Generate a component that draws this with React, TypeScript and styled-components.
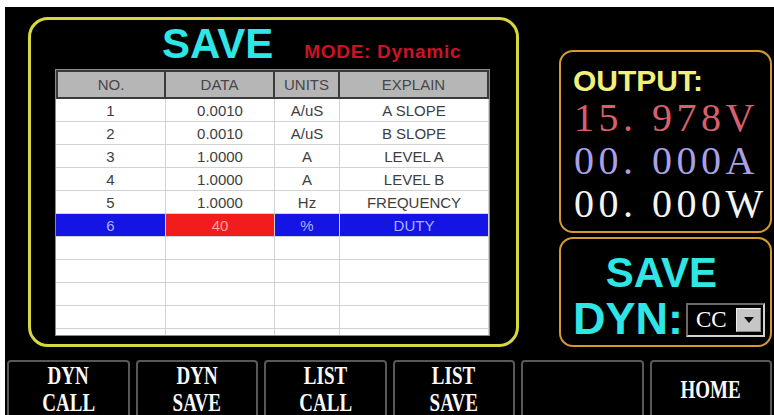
import React from 'react';
import styled, { createGlobalStyle } from 'styled-components';

const GlobalStyle = createGlobalStyle`
  html, body {
    margin: 0;
    padding: 0;
    background: #ffffff;
    overflow: hidden;
  }
  * {
    box-sizing: border-box;
  }
`;

const Screen = styled.div`
  margin: 7px 0 0 5px;
  width: 769px;
  height: 408px;
  background: #000;
  overflow: hidden;
  display: flex;
  flex-direction: column;
  font-family: 'Liberation Sans', Arial, sans-serif;
`;

const TopArea = styled.div`
  display: flex;
  height: 353px;
  padding-left: 23px;
  flex-shrink: 0;
`;

const SavePanel = styled.div`
  margin-top: 10px;
  width: 491px;
  height: 330px;
  border: 3px solid #d8d83c;
  border-radius: 20px;
  display: flex;
  flex-direction: column;
`;

const TitleRow = styled.div`
  display: flex;
  align-items: baseline;
  padding: 3px 0 0 131px;
`;

const Title = styled.span`
  color: #2ee6e6;
  font-weight: 700;
  font-size: 42px;
  line-height: 42px;
`;

const Mode = styled.span`
  margin-left: 31px;
  color: #cc1228;
  font-weight: 700;
  font-size: 19px;
  letter-spacing: 0.7px;
`;

const TableFrame = styled.div`
  margin: 4px 0 0 24px;
  width: 435px;
  height: 267px;
  overflow: hidden;
  background: #fff;
  border: 1px solid #8a8a8a;
  font-size: 15px;
`;

const Row = styled.div<{ $header?: boolean }>`
  display: grid;
  grid-template-columns: 110px 109px 65px 149px;
  height: ${(p) => (p.$header ? 29 : 23)}px;
  ${(p) =>
    p.$header
      ? `border-top: 2px solid #3a3a3a; border-bottom: 2px solid #3a3a3a; background: #b6b6b6;`
      : `border-bottom: 1px solid #d2d2d2;`}
`;

const Cell = styled.div<{ $header?: boolean; $tone?: 'blue' | 'red' }>`
  display: flex;
  align-items: center;
  justify-content: center;
  color: ${(p) =>
    p.$tone === 'blue' ? '#a9b4ff' : p.$tone === 'red' ? '#ffa6a6' : p.$header ? '#474747' : '#3e3e3e'};
  background: ${(p) =>
    p.$tone === 'blue' ? '#1414e4' : p.$tone === 'red' ? '#f21c1c' : 'transparent'};
  border-right: ${(p) => (p.$header ? '2px solid #3a3a3a' : '1px solid #d2d2d2')};
  &:first-child {
    border-left: ${(p) => (p.$header ? '2px solid #3a3a3a' : '0')};
  }
`;

const RightColumn = styled.div`
  margin-left: 40px;
  width: 213px;
  display: flex;
  flex-direction: column;
`;

const OrangePanel = styled.div<{ $height: number; $top: number }>`
  margin-top: ${(p) => p.$top}px;
  height: ${(p) => p.$height}px;
  border: 2px solid #d49a2f;
  border-radius: 14px;
  display: flex;
  flex-direction: column;
`;

const OutputBody = styled.div`
  padding: 14px 0 0 12px;
`;

const OutputTitle = styled.div`
  color: #f0f07a;
  font-weight: 700;
  font-size: 30px;
  line-height: 30px;
`;

const Readout = styled.div<{ $color: string }>`
  color: ${(p) => p.$color};
  font-family: 'Liberation Serif', 'Times New Roman', serif;
  font-size: 40px;
  line-height: 43px;
  letter-spacing: 4.5px;
  margin-left: 1px;
  white-space: pre;
  &:first-of-type {
    margin-top: 2px;
  }
`;

const SaveBody = styled.div`
  padding-top: 12px;
  display: flex;
  flex-direction: column;
`;

const SaveTitle = styled.div`
  color: #2ee6e6;
  font-weight: 700;
  font-size: 42px;
  line-height: 43px;
  text-align: center;
  padding-right: 8px;
`;

const DynRow = styled.div`
  display: flex;
  align-items: center;
  margin-top: 2px;
  padding-left: 12px;
`;

const DynLabel = styled.span`
  color: #2ee6e6;
  font-weight: 700;
  font-size: 45px;
  line-height: 45px;
`;

const Dropdown = styled.div`
  margin: 3px 0 0 3px;
  width: 79px;
  height: 34px;
  background: #000;
  border: 2px solid;
  border-color: #6a6a6a #d2d2d2 #d2d2d2 #6a6a6a;
  display: flex;
  align-items: center;
  justify-content: space-between;
  padding: 0 2px 0 8px;
`;

const DropValue = styled.span`
  color: #fff;
  font-family: 'Liberation Serif', 'Times New Roman', serif;
  font-size: 23px;
`;

const DropArrow = styled.div`
  width: 25px;
  height: 24px;
  background: #c6c6c6;
  border: 1px solid;
  border-color: #efefef #8a8a8a #8a8a8a #efefef;
  display: flex;
  align-items: center;
  justify-content: center;
`;

const ButtonBar = styled.div`
  display: grid;
  grid-template-columns: repeat(6, 1fr);
  gap: 6px;
  padding: 0 2px;
`;

const SoftKey = styled.div`
  height: 58px;
  border: 2px solid #585858;
  border-radius: 4px;
  background: #000;
  display: flex;
  flex-direction: column;
  align-items: center;
  justify-content: center;
`;

const KeyLine = styled.span`
  display: block;
  color: #fafafa;
  font-family: 'Liberation Serif', 'Times New Roman', serif;
  font-weight: 700;
  font-size: 25px;
  line-height: 27px;
  transform: scaleX(0.76);
  white-space: nowrap;
`;

const rows = [
  ['1', '0.0010', 'A/uS', 'A SLOPE'],
  ['2', '0.0010', 'A/uS', 'B SLOPE'],
  ['3', '1.0000', 'A', 'LEVEL A'],
  ['4', '1.0000', 'A', 'LEVEL B'],
  ['5', '1.0000', 'Hz', 'FREQUENCY'],
];

const keys = [['DYN', 'CALL'], ['DYN', 'SAVE'], ['LIST', 'CALL'], ['LIST', 'SAVE'], [], ['HOME']];

const App: React.FC = () => {
  return (
    <>
      <GlobalStyle />
      <Screen>
        <TopArea>
          <SavePanel>
            <TitleRow>
              <Title>SAVE</Title>
              <Mode>MODE: Dynamic</Mode>
            </TitleRow>
            <TableFrame>
              <Row $header>
                {['NO.', 'DATA', 'UNITS', 'EXPLAIN'].map((h) => (
                  <Cell key={h} $header>
                    {h}
                  </Cell>
                ))}
              </Row>
              {rows.map((r) => (
                <Row key={r[0]}>
                  {r.map((c, i) => (
                    <Cell key={i}>{c}</Cell>
                  ))}
                </Row>
              ))}
              <Row>
                <Cell $tone="blue">6</Cell>
                <Cell $tone="red">40</Cell>
                <Cell $tone="blue">%</Cell>
                <Cell $tone="blue">DUTY</Cell>
              </Row>
              {[0, 1, 2, 3, 4].map((n) => (
                <Row key={`e${n}`}>
                  <Cell />
                  <Cell />
                  <Cell />
                  <Cell />
                </Row>
              ))}
            </TableFrame>
          </SavePanel>

          <RightColumn>
            <OrangePanel $top={43} $height={183}>
              <OutputBody>
                <OutputTitle>OUTPUT:</OutputTitle>
                <Readout $color="#d8606c">15. 978V</Readout>
                <Readout $color="#a9a0e6">00. 000A</Readout>
                <Readout $color="#f4f4f4">00. 000W</Readout>
              </OutputBody>
            </OrangePanel>
            <OrangePanel $top={4} $height={110}>
              <SaveBody>
                <SaveTitle>SAVE</SaveTitle>
                <DynRow>
                  <DynLabel>DYN:</DynLabel>
                  <Dropdown>
                    <DropValue>CC</DropValue>
                    <DropArrow>
                      <svg width="12" height="8" viewBox="0 0 12 8">
                        <path d="M1 1 L11 1 L6 7 Z" fill="#111" />
                      </svg>
                    </DropArrow>
                  </Dropdown>
                </DynRow>
              </SaveBody>
            </OrangePanel>
          </RightColumn>
        </TopArea>

        <ButtonBar>
          {keys.map((k, i) => (
            <SoftKey key={i}>
              {k.map((line) => (
                <KeyLine key={line}>{line}</KeyLine>
              ))}
            </SoftKey>
          ))}
        </ButtonBar>
      </Screen>
    </>
  );
};

export default App;
